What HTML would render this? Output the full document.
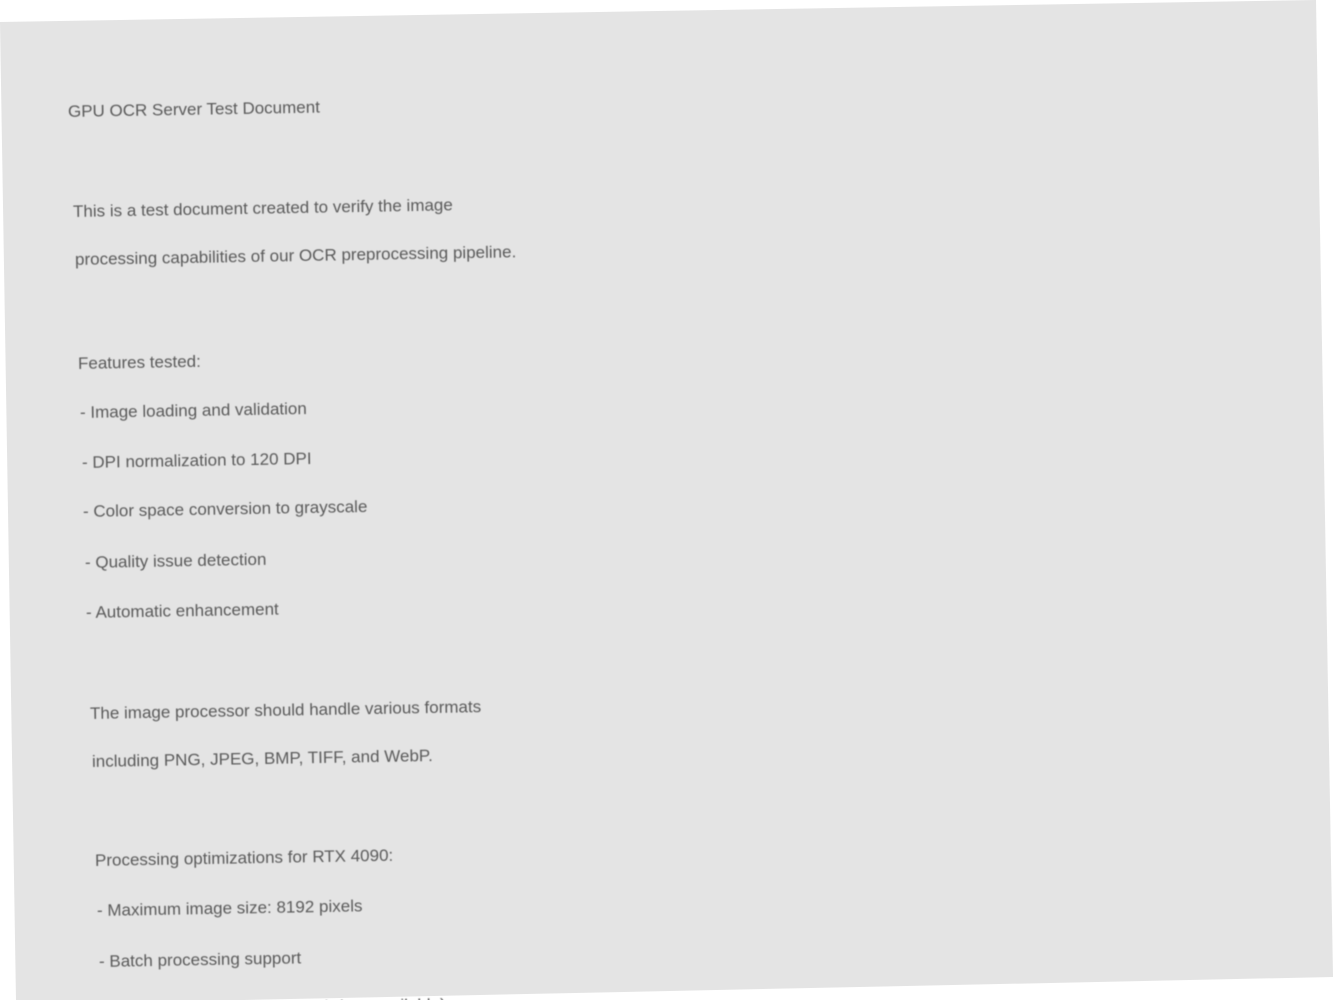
<!DOCTYPE html>
<html><head><meta charset="utf-8"><style>
html,body{margin:0;padding:0;width:1333px;height:1000px;background:#fff;overflow:hidden;position:relative}
.pg{position:absolute;left:0;top:0;width:1333px;height:1000px;background:#e4e4e4;clip-path:polygon(0 22px,1316px 0,1333px 976px,1333px 977px,243px 1000px,16px 1000px)}
.t{position:absolute;font-family:"Liberation Sans",sans-serif;font-size:17px;color:#5a5a5a;letter-spacing:0px;white-space:nowrap;transform:rotate(-1deg);transform-origin:0 50%;line-height:18px;filter:blur(0.5px)}
</style></head><body>
<div class="pg"></div>
<div class="t" style="left:68px;top:103px">GPU OCR Server Test Document</div>
<div class="t" style="left:73px;top:203px">This is a test document created to verify the image</div>
<div class="t" style="left:75px;top:251px">processing capabilities of our OCR preprocessing pipeline.</div>
<div class="t" style="left:78px;top:355px">Features tested:</div>
<div class="t" style="left:80px;top:404px">- Image loading and validation</div>
<div class="t" style="left:82px;top:454px">- DPI normalization to 120 DPI</div>
<div class="t" style="left:83px;top:503px">- Color space conversion to grayscale</div>
<div class="t" style="left:85px;top:554px">- Quality issue detection</div>
<div class="t" style="left:86px;top:604px">- Automatic enhancement</div>
<div class="t" style="left:90px;top:705px">The image processor should handle various formats</div>
<div class="t" style="left:92px;top:753px">including PNG, JPEG, BMP, TIFF, and WebP.</div>
<div class="t" style="left:95px;top:852px">Processing optimizations for RTX 4090:</div>
<div class="t" style="left:97px;top:902px">- Maximum image size: 8192 pixels</div>
<div class="t" style="left:99px;top:953px">- Batch processing support</div>
<div class="t" style="left:100px;top:1002px">- GPU memory management (when available)</div>
</body></html>
